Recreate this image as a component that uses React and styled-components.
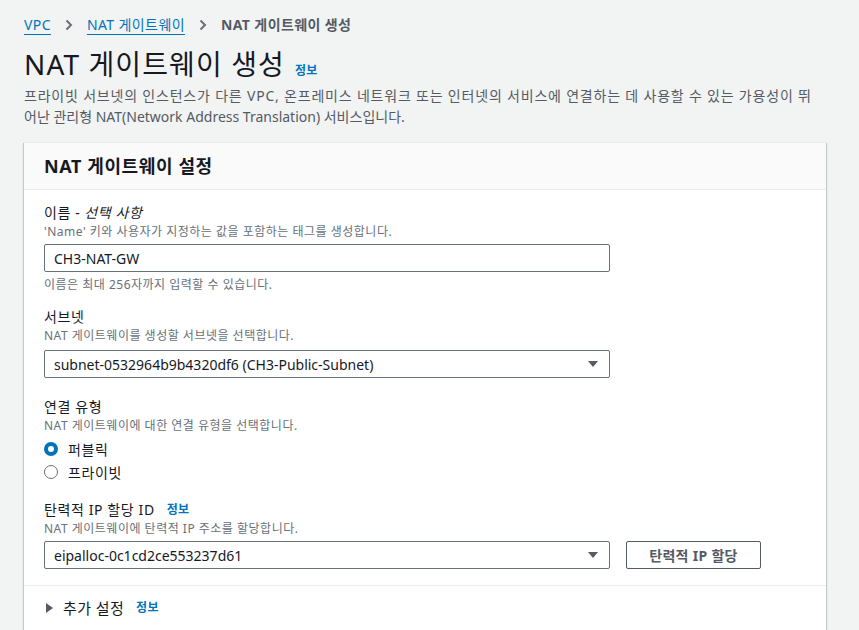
import React from 'react';
import styled, { createGlobalStyle } from 'styled-components';

const GlobalStyle = createGlobalStyle`
  html, body {
    margin: 0;
    padding: 0;
    background: #f2f3f3;
  }
  body {
    font-family: "Noto Sans", "Noto Sans CJK KR", sans-serif;
    color: #16191f;
  }
`;

const Page = styled.div`
  width: 859px;
  height: 630px;
  overflow: hidden;
  padding: 14px 24px 0 24px;
  box-sizing: border-box;
`;

const Breadcrumbs = styled.nav`
  display: flex;
  align-items: center;
  gap: 14px;
  font-size: 14px;
  line-height: 22px;
  letter-spacing: 0.4px;
`;

const Crumb = styled.a`
  color: #0073bb;
  text-decoration: underline;
  text-underline-offset: 4px;
  text-decoration-thickness: 1px;
`;

const Current = styled.span`
  color: #545b64;
  font-weight: 700;
`;

const Chevron = () => (
  <svg width="8" height="12" viewBox="0 0 8 12">
    <path d="M1.5 1.5 L6 6 L1.5 10.5" fill="none" stroke="#687078" strokeWidth="2" />
  </svg>
);

const TitleRow = styled.div`
  display: flex;
  align-items: baseline;
  gap: 10px;
  margin-top: 10px;
`;

const Title = styled.h1`
  margin: 0;
  font-size: 28px;
  line-height: 36px;
  font-weight: 400;
  letter-spacing: 1.1px;
  color: #16191f;
`;

const InfoLink = styled.a`
  color: #0073bb;
  font-size: 12px;
  font-weight: 700;
  letter-spacing: 0.3px;
  margin-left: ${p => p.$gap || 0}px;
`;

const Description = styled.p`
  margin: 3px 0 0 0;
  font-size: 14px;
  line-height: 21px;
  color: #545b64;
  white-space: nowrap;
`;

const Line = styled.span`
  display: block;
  letter-spacing: ${p => p.$spacing || 0}px;
`;

const Card = styled.section`
  margin-top: 15px;
  width: 802px;
  background: #fff;
  box-shadow: 0 1px 1px 0 rgba(0, 28, 36, 0.3), 1px 1px 1px 0 rgba(0, 28, 36, 0.15), -1px 1px 1px 0 rgba(0, 28, 36, 0.15);
  border-top: 1px solid #eaeded;
`;

const CardHeader = styled.header`
  background: #fafafa;
  border-bottom: 1px solid #eaeded;
  padding: 0 20px 3px 20px;
  height: 47px;
  box-sizing: border-box;
  display: flex;
  align-items: center;
`;

const CardTitle = styled.h2`
  margin: 0;
  font-size: 18px;
  font-weight: 700;
  letter-spacing: 0.6px;
  color: #16191f;
`;

const CardBody = styled.div`
  padding: 12px 20px 16px 20px;
  display: flex;
  flex-direction: column;
`;

const Field = styled.div`
  display: flex;
  flex-direction: column;
  margin-top: ${p => p.$top || 0}px;
`;

const Label = styled.label`
  font-size: 14px;
  line-height: 22px;
  letter-spacing: 0.6px;
  color: #16191f;
  display: flex;
  align-items: center;
  em { font-style: italic; margin-left: 4px; }
`;

const Hint = styled.div`
  font-size: 12px;
  line-height: 16px;
  letter-spacing: 0.5px;
  color: #687078;
  margin-top: ${p => p.$top || 0}px;
`;

const Control = styled.div`
  margin-top: ${p => p.$top || 4}px;
  display: flex;
  align-items: center;
  gap: 16px;
`;

const Box = styled.div`
  width: 566px;
  height: 28px;
  box-sizing: border-box;
  border: 1px solid #687078;
  border-radius: 2px;
  display: flex;
  align-items: center;
  justify-content: space-between;
  padding: 0 10px 0 9px;
  font-size: 14px;
  color: #16191f;
  background: #fff;
`;

const Caret = () => (
  <svg width="12" height="8" viewBox="0 0 12 8">
    <path d="M1 1 L11 1 L6 7 Z" fill="#545b64" />
  </svg>
);

const Button = styled.button`
  width: 135px;
  height: 28px;
  box-sizing: border-box;
  border: 1px solid #545b64;
  border-radius: 2px;
  background: #fff;
  color: #545b64;
  font-family: inherit;
  font-size: 14px;
  font-weight: 700;
  letter-spacing: 0.3px;
  padding: 0;
`;

const RadioList = styled.div`
  margin-top: 3px;
  display: flex;
  flex-direction: column;
`;

const RadioRow = styled.div`
  display: flex;
  align-items: center;
  gap: 10px;
  height: 23px;
  font-size: 14px;
  letter-spacing: 0.6px;
  color: #16191f;
`;

const RadioDot = styled.span`
  width: 14px;
  height: 14px;
  box-sizing: border-box;
  border-radius: 50%;
  background: #fff;
  border: ${p => (p.$checked ? '4px solid #0073bb' : '1px solid #687078')};
`;

const CardFooter = styled.div`
  border-top: 1px solid #eaeded;
  padding: 11px 20px 12px 22px;
  display: flex;
  align-items: center;
  font-size: 14px;
  line-height: 22px;
  color: #16191f;
`;

const Expander = styled.span`
  display: flex;
  align-items: center;
  gap: 10px;
  font-size: 15px;
  letter-spacing: 0.4px;
`;

const Triangle = () => (
  <svg width="7" height="10" viewBox="0 0 7 10">
    <path d="M0 0 L7 5 L0 10 Z" fill="#545b64" />
  </svg>
);

export default function App() {
  return (
    <>
      <GlobalStyle />
      <Page>
        <Breadcrumbs>
          <Crumb>VPC</Crumb>
          <Chevron />
          <Crumb>NAT 게이트웨이</Crumb>
          <Chevron />
          <Current>NAT 게이트웨이 생성</Current>
        </Breadcrumbs>

        <TitleRow>
          <Title>NAT 게이트웨이 생성</Title>
          <InfoLink>정보</InfoLink>
        </TitleRow>
        <Description>
          <Line $spacing={0.8}>
            프라이빗 서브넷의 인스턴스가 다른 VPC, 온프레미스 네트워크 또는 인터넷의 서비스에 연결하는 데 사용할 수 있는 가용성이 뛰
          </Line>
          <Line>어난 관리형 NAT(Network Address Translation) 서비스입니다.</Line>
        </Description>

        <Card>
          <CardHeader>
            <CardTitle>NAT 게이트웨이 설정</CardTitle>
          </CardHeader>
          <CardBody>
            <Field>
              <Label>이름 - <em>선택 사항</em></Label>
              <Hint>'Name' 키와 사용자가 지정하는 값을 포함하는 태그를 생성합니다.</Hint>
              <Control>
                <Box>CH3-NAT-GW</Box>
              </Control>
              <Hint $top={5}>이름은 최대 256자까지 입력할 수 있습니다.</Hint>
            </Field>

            <Field $top={13}>
              <Label>서브넷</Label>
              <Hint>NAT 게이트웨이를 생성할 서브넷을 선택합니다.</Hint>
              <Control $top={6}>
                <Box>
                  subnet-0532964b9b4320df6 (CH3-Public-Subnet)
                  <Caret />
                </Box>
              </Control>
            </Field>

            <Field $top={18}>
              <Label>연결 유형</Label>
              <Hint>NAT 게이트웨이에 대한 연결 유형을 선택합니다.</Hint>
              <RadioList>
                <RadioRow>
                  <RadioDot $checked />
                  퍼블릭
                </RadioRow>
                <RadioRow>
                  <RadioDot />
                  프라이빗
                </RadioRow>
              </RadioList>
            </Field>

            <Field $top={16}>
              <Label>
                탄력적 IP 할당 ID
                <InfoLink $gap={12}>정보</InfoLink>
              </Label>
              <Hint>NAT 게이트웨이에 탄력적 IP 주소를 할당합니다.</Hint>
              <Control>
                <Box>
                  eipalloc-0c1cd2ce553237d61
                  <Caret />
                </Box>
                <Button>탄력적 IP 할당</Button>
              </Control>
            </Field>
          </CardBody>
          <CardFooter>
            <Expander>
              <Triangle />
              추가 설정
            </Expander>
            <InfoLink $gap={12}>정보</InfoLink>
          </CardFooter>
        </Card>
      </Page>
    </>
  );
}
